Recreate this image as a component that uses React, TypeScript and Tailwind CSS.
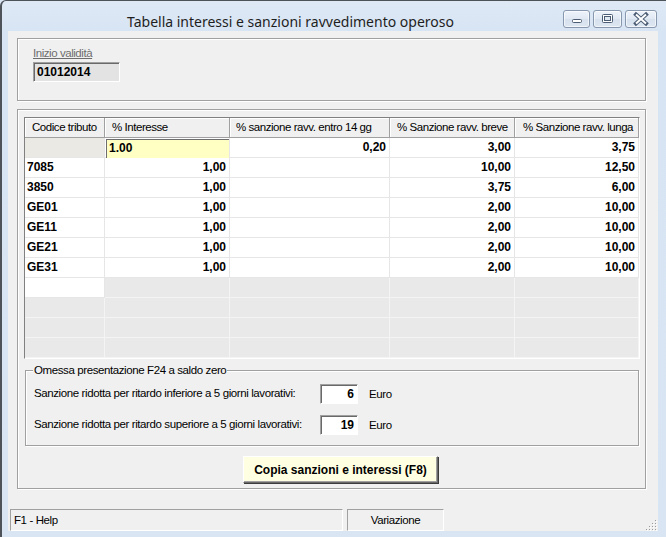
import React from "react";

const COLS = "grid grid-cols-[80px_125px_160px_125px_124px]";

type Row = { code: string; i: string; s14: string; b: string; l: string };

const rows: Row[] = [
  { code: "7085", i: "1,00", s14: "", b: "10,00", l: "12,50" },
  { code: "3850", i: "1,00", s14: "", b: "3,75", l: "6,00" },
  { code: "GE01", i: "1,00", s14: "", b: "2,00", l: "10,00" },
  { code: "GE11", i: "1,00", s14: "", b: "2,00", l: "10,00" },
  { code: "GE21", i: "1,00", s14: "", b: "2,00", l: "10,00" },
  { code: "GE31", i: "1,00", s14: "", b: "2,00", l: "10,00" },
];

const headers = [
  "Codice tributo",
  "% Interesse",
  "% sanzione ravv. entro 14 gg",
  "% Sanzione ravv. breve",
  "% Sanzione ravv. lunga",
];

const whiteCell =
  "h-[20px] bg-white border-r border-b border-[#e6e6e6] text-[12px] font-bold leading-[19px] whitespace-nowrap";
const grayCell = "h-[20px] bg-[#e9e9e9] border-r border-b border-[#f4f4f4]";

function WinBtn({ w, children }: { w: number; children: React.ReactNode }) {
  return (
    <div
      style={{ width: w }}
      className="h-[18px] rounded-[3px] border border-[#8797ae] bg-[linear-gradient(#eef3fa,#e0e8f3_50%,#d6e1ee_50%,#dde7f2)] shadow-[inset_0_0_0_1px_rgba(255,255,255,0.6)]"
    >
      {children}
    </div>
  );
}

function Sunken({
  className,
  children,
}: {
  className: string;
  children?: React.ReactNode;
}) {
  return (
    <div
      className={
        "border border-t-[#a0a0a0] border-l-[#a0a0a0] border-r-white border-b-white shadow-[inset_1px_1px_0_#696969] " +
        className
      }
    >
      {children}
    </div>
  );
}

export default function App() {
  return (
    <div className="w-[666px] h-[537px] overflow-hidden bg-[#d9e5f3] font-['Liberation_Sans',Arial,sans-serif] text-black">
      <div className="w-[666px] h-[537px] flex flex-col border-l-2 border-t border-[#4e535a] rounded-tl-[6px] bg-[linear-gradient(#dfe9f6,#d7e4f3_31px,#d9e5f3)]">
        {/* Title bar */}
        <div className="h-[30px] flex shrink-0">
          <div className="flex-1 pl-[125px] pt-[11px] text-[14px] leading-[20px] text-[#1e1e1e] font-['Noto_Sans',sans-serif] whitespace-nowrap">
            Tabella interessi e sanzioni ravvedimento operoso
          </div>
          <div className="flex gap-[3px] mt-[9px] mr-[9px]">
            <WinBtn w={27}>
              <svg width="25" height="16" viewBox="0 0 25 16">
                <rect x="8.5" y="8.5" width="9" height="3" rx="1" fill="#fff" stroke="#4c5c74" />
              </svg>
            </WinBtn>
            <WinBtn w={29}>
              <svg width="27" height="16" viewBox="0 0 27 16">
                <rect x="8.5" y="3.5" width="10" height="8" rx="1" fill="#fff" stroke="#4c5c74" />
                <rect x="10.5" y="5.5" width="6" height="4" fill="#dfe7f1" stroke="#4c5c74" />
              </svg>
            </WinBtn>
            <WinBtn w={32}>
              <svg width="30" height="16" viewBox="0 0 30 16">
                <path d="M10 3.5 L20 12.5 M20 3.5 L10 12.5" stroke="#4c5c74" strokeWidth="4" strokeLinecap="square" />
                <path d="M10 3.5 L20 12.5 M20 3.5 L10 12.5" stroke="#ffffff" strokeWidth="2" strokeLinecap="butt" />
              </svg>
            </WinBtn>
          </div>
        </div>

        {/* Client area */}
        <div className="ml-[6px] w-[650px] h-[500px] bg-[#f0f0f0] flex flex-col pt-[7px] pl-[9px] shrink-0">
          {/* Top group */}
          <div className="w-[629px] h-[63px] border border-[#a0a0a0] shadow-[inset_1px_1px_0_#fff,1px_1px_0_#fff] pl-[15px] flex flex-col">
            <div className="mt-[8px] text-[11.5px] leading-[13px] tracking-[-0.45px] text-[#6d6d6d] underline whitespace-nowrap">
              Inizio validità
            </div>
            <Sunken className="mt-[2px] w-[87px] h-[20px] bg-[#e3e3e3] pl-[3px] text-[12px] font-bold leading-[18px]">
              01012014
            </Sunken>
          </div>

          {/* Main group */}
          <div className="mt-[8px] w-[629px] h-[380px] border border-[#a0a0a0] shadow-[inset_1px_1px_0_#fff,1px_1px_0_#fff] flex flex-col">
            {/* Grid */}
            <div className="mt-[7px] ml-[6px] w-[616px] border border-t-[#808080] border-l-[#808080] border-r-white border-b-white">
              <div className={COLS}>
                {headers.map((h, idx) => (
                  <div
                    key={h}
                    className={
                      "h-[20px] bg-[#f0f0f0] border-r border-b border-[#a0a0a0] shadow-[inset_1px_1px_0_#fff] text-[11.5px] leading-[19px] tracking-[-0.45px] whitespace-nowrap overflow-hidden " +
                      (idx === 4 ? "pl-[8px]" : idx === 2 ? "pl-[6px]" : "pl-[7px]")
                    }
                  >
                    {h}
                  </div>
                ))}
              </div>
              {/* Edit row */}
              <div className={COLS}>
                <div className="h-[20px] bg-[#ebe9e3] border-r border-b border-[#e6e6e6]" />
                <div className={whiteCell}>
                  <div className="mt-[1px] ml-[1px] h-[19px] bg-[#ffffc4] border-t border-l border-[#6d6d6d] pl-[2px] leading-[17px]">
                    1.00
                  </div>
                </div>
                <div className={whiteCell + " text-right pr-[3px]"}>0,20</div>
                <div className={whiteCell + " text-right pr-[3px]"}>3,00</div>
                <div className={whiteCell + " text-right pr-[3px]"}>3,75</div>
              </div>
              {rows.map((r) => (
                <div key={r.code} className={COLS}>
                  <div className={whiteCell + " pl-[2px]"}>{r.code}</div>
                  <div className={whiteCell + " text-right pr-[3px]"}>{r.i}</div>
                  <div className={whiteCell + " text-right pr-[3px]"}>{r.s14}</div>
                  <div className={whiteCell + " text-right pr-[3px]"}>{r.b}</div>
                  <div className={whiteCell + " text-right pr-[3px]"}>{r.l}</div>
                </div>
              ))}
              <div className={COLS}>
                <div className="h-[20px] bg-white border-r border-b border-[#e6e6e6]" />
                <div className={grayCell} />
                <div className={grayCell} />
                <div className={grayCell} />
                <div className={grayCell} />
              </div>
              {[0, 1, 2].map((k) => (
                <div key={k} className={COLS}>
                  <div className={grayCell} />
                  <div className={grayCell} />
                  <div className={grayCell} />
                  <div className={grayCell} />
                  <div className={grayCell} />
                </div>
              ))}
            </div>

            {/* Omessa group */}
            <div className="relative mt-[11px] ml-[7px] w-[614px] h-[76px] border border-[#a0a0a0] shadow-[inset_1px_1px_0_#fff,1px_1px_0_#fff] pt-[13px] pl-[8px] flex flex-col gap-[11px] text-[11.5px] tracking-[-0.4px]">
              <span className="absolute left-[7px] top-[-8px] bg-[#f0f0f0] px-[1px] leading-[14px] whitespace-nowrap">
                Omessa presentazione F24 a saldo zero
              </span>
              {[
                ["Sanzione ridotta per ritardo inferiore a 5 giorni lavorativi:", "6"],
                ["Sanzione ridotta per ritardo superiore a 5 giorni lavorativi:", "19"],
              ].map(([label, val]) => (
                <div key={label} className="flex items-center h-[20px]">
                  <div className="w-[286px] whitespace-nowrap">{label}</div>
                  <Sunken className="w-[38px] h-[20px] bg-white text-right pr-[3px] text-[12px] font-bold leading-[18px] tracking-normal">
                    {val}
                  </Sunken>
                  <div className="ml-[11px] mt-[2px]">Euro</div>
                </div>
              ))}
            </div>

            {/* Button */}
            <div className="mt-[10px] ml-[225px] w-[195px] h-[27px] bg-[#ffffe1] border border-t-white border-l-white border-r-[#696969] border-b-[#696969] shadow-[inset_-1px_-1px_0_#a0a0a0,1px_1px_0_#3c3c3c] flex items-center justify-center text-[12px] font-bold whitespace-nowrap">
              Copia sanzioni e interessi (F8)
            </div>
          </div>

          {/* Status bar */}
          <div className="mt-[20px] -ml-[8px] h-[22px] flex items-stretch text-[11.5px] tracking-[-0.4px]">
            <div className="ml-[1px] w-[333px] border border-t-[#a0a0a0] border-l-[#a0a0a0] border-r-white border-b-white pl-[3px] leading-[20px]">
              F1 - Help
            </div>
            <div className="ml-[4px] w-[97px] border border-t-[#a0a0a0] border-l-[#a0a0a0] border-r-white border-b-white text-center leading-[20px]">
              Variazione
            </div>
            <div className="flex-1 flex items-end justify-end">
              <svg width="12" height="12" viewBox="0 0 12 12">
                {[
                  [10, 2], [10, 5], [7, 5], [10, 8], [7, 8], [4, 8], [10, 11], [7, 11], [4, 11], [1, 11],
                ].map(([x, y], i) => (
                  <g key={i}>
                    <rect x={x - 1} y={y - 1} width="1" height="1" fill="#9a9a9a" />
                    <rect x={x} y={y} width="1" height="1" fill="#ffffff" />
                  </g>
                ))}
              </svg>
            </div>
          </div>
        </div>
      </div>
    </div>
  );
}
